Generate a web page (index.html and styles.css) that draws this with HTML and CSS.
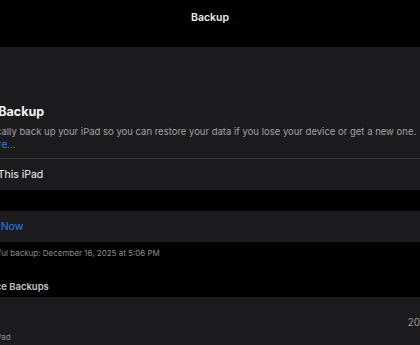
FILE: index.html
```html
<!DOCTYPE html>
<html>
<head>
<meta charset="utf-8">
<link rel="stylesheet" href="styles.css">
</head>
<body>
<div class="page">
  <header class="nav"><span class="nav-title">Backup</span></header>

  <section class="card intro">
    <h1 class="intro-title">iCloud Backup</h1>
    <p class="intro-text">Automatically back up your iPad so you can restore your data if you lose your device or get a new one. <span class="link">Learn more...</span></p>
    <div class="sep"></div>
    <div class="row toggle-row">Back Up This iPad</div>
  </section>

  <section class="card action">
    <div class="row link-row">Back Up Now</div>
  </section>
  <p class="footnote">Last successful backup: December 16, 2025 at 5:06 PM</p>

  <h2 class="section-head">All Device Backups</h2>
  <section class="card devices">
    <div class="device">
      <div class="device-text"><span class="device-sub">This iPad</span></div>
      <span class="device-size">20.4 GB</span>
    </div>
  </section>
</div>
</body>
</html>
```
FILE: styles.css
```css
html, body {
  margin: 0;
  padding: 0;
  background: #000;
  overflow: hidden;
  width: 420px;
  height: 345px;
}
body {
  font-family: Inter, "Noto Sans", sans-serif;
  color: #f2f2f7;
  -webkit-font-smoothing: antialiased;
}
.page {
  width: 540px;
  margin-left: -60px;
}
.nav {
  height: 47px;
  display: flex;
  justify-content: center;
  align-items: flex-start;
}
.nav-title {
  line-height: 36px;
  font-size: 10.5px;
  font-weight: 600;
  color: #ececec;
}
.card {
  background: #1c1c1e;
}
.intro {
  padding-top: 57px;
}
.intro-title {
  margin: 0 16px;
  font-size: 12.5px;
  line-height: 16px;
  font-weight: 700;
  color: #f5f5f7;
}
.intro-text {
  margin: 5px 16px 0;
  max-width: 465px;
  font-size: 9.5px;
  line-height: 13px;
  color: #a1a1a6;
}
.link {
  color: #2f7de8;
}
.sep {
  height: 1px;
  background: #38383a;
  margin-top: 7px;
}
.row {
  height: 31px;
  line-height: 31px;
  padding: 0 16px;
  font-size: 10.5px;
  color: #f2f2f7;
}
.toggle-row {
  padding-left: 13px;
}
.action {
  margin-top: 21px;
}
.link-row {
  color: #2f7de8;
}
.footnote {
  margin: 6px 16px 0 9px;
  font-size: 8px;
  line-height: 11px;
  color: #8e8e93;
}
.section-head {
  margin: 21px 16px 3px 21px;
  font-size: 9.5px;
  line-height: 14px;
  font-weight: 600;
  color: #c7c7cc;
}
.devices {
  height: 60px;
}
.device {
  display: flex;
  align-items: flex-start;
  padding: 0 16px 0 36px;
}
.device-text {
  flex: 1;
  padding-top: 27px;
}
.device-sub {
  font-size: 8px;
  line-height: 11px;
  color: #8e8e93;
}
.device-size {
  padding-top: 18px;
  font-size: 10px;
  line-height: 14px;
  color: #98989d;
  margin-right: 18px;
}
```
